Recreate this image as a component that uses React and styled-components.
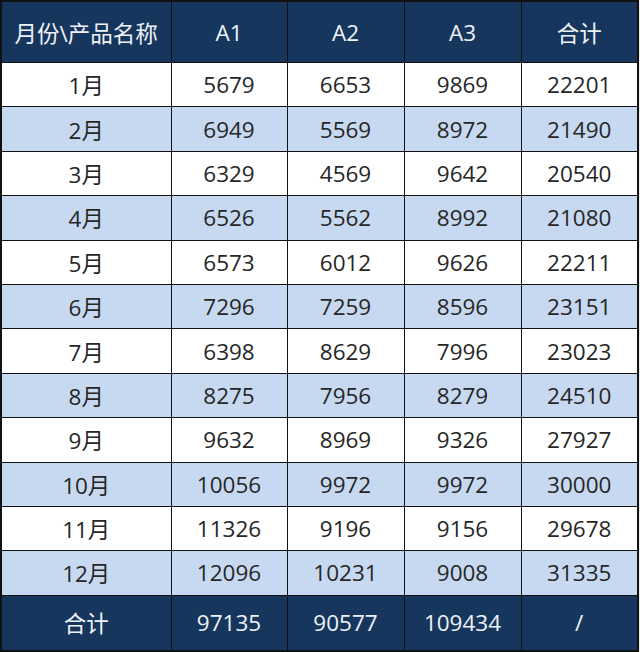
import React from "react";
import styled, { createGlobalStyle } from "styled-components";

const GlobalStyle = createGlobalStyle`
  html, body {
    margin: 0;
    padding: 0;
    background: #ececec;
  }
  body {
    font-family: "Open Sans", "Noto Sans CJK SC", sans-serif;
  }
`;

const Table = styled.table`
  width: 637px;
  border-collapse: collapse;
  border: 2px solid #111;
  table-layout: fixed;
  font-size: 22.5px;
  text-align: center;

  col:nth-child(1) {
    width: 170px;
  }
  col:nth-child(2) {
    width: 116px;
  }
  col:nth-child(n + 3) {
    width: 117px;
  }
`;

const HeadCell = styled.th`
  height: 60px;
  padding: 0;
  font-weight: 400;
  color: #eef2f8;
  background: #17365d;
  border: 1px solid #111;
`;

const Cell = styled.td`
  height: 43.4px;
  padding: 0;
  color: #262626;
  background: ${(p) => (p.$alt ? "#c6d9f0" : "#ffffff")};
  border: 1px solid #111;
`;

const FootCell = styled.td`
  height: 54px;
  padding: 0;
  color: #eef2f8;
  background: #17365d;
  border: 1px solid #111;
`;

const headers = ["月份\\产品名称", "A1", "A2", "A3", "合计"];

const rows = [
  ["1月", 5679, 6653, 9869, 22201],
  ["2月", 6949, 5569, 8972, 21490],
  ["3月", 6329, 4569, 9642, 20540],
  ["4月", 6526, 5562, 8992, 21080],
  ["5月", 6573, 6012, 9626, 22211],
  ["6月", 7296, 7259, 8596, 23151],
  ["7月", 6398, 8629, 7996, 23023],
  ["8月", 8275, 7956, 8279, 24510],
  ["9月", 9632, 8969, 9326, 27927],
  ["10月", 10056, 9972, 9972, 30000],
  ["11月", 11326, 9196, 9156, 29678],
  ["12月", 12096, 10231, 9008, 31335],
];

const totals = ["合计", 97135, 90577, 109434, "/"];

export default function App() {
  return (
    <>
      <GlobalStyle />
      <Table>
        <colgroup>
          {headers.map((h) => (
            <col key={h} />
          ))}
        </colgroup>
        <thead>
          <tr>
            {headers.map((h) => (
              <HeadCell key={h}>{h}</HeadCell>
            ))}
          </tr>
        </thead>
        <tbody>
          {rows.map((r, i) => (
            <tr key={r[0]}>
              {r.map((v, j) => (
                <Cell key={j} $alt={i % 2 === 1}>
                  {v}
                </Cell>
              ))}
            </tr>
          ))}
        </tbody>
        <tfoot>
          <tr>
            {totals.map((v, j) => (
              <FootCell key={j}>{v}</FootCell>
            ))}
          </tr>
        </tfoot>
      </Table>
    </>
  );
}
